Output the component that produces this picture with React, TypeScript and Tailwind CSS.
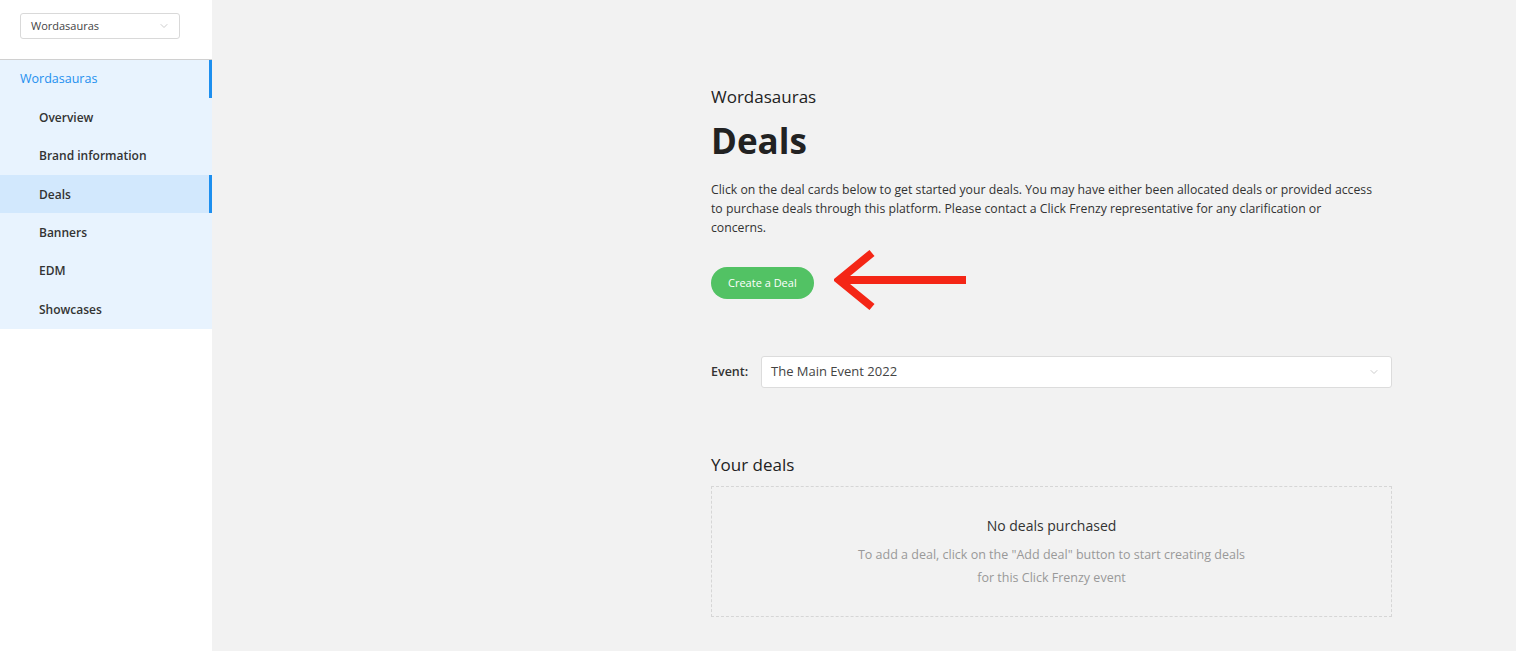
import React from 'react';
import { ChevronDown } from 'lucide-react';

const navItems = ['Overview', 'Brand information', 'Deals', 'Banners', 'EDM', 'Showcases'];

function Sidebar() {
  return (
    <aside className="w-[212px] shrink-0 bg-white min-h-[651px]">
      <div className="h-[59px] px-5 pt-[13px]">
        <div className="flex h-[26px] w-[160px] items-center justify-between rounded-[3px] border border-[#d9d9d9] pl-[10px] pr-[9px] text-[11px] text-[#444]">
          <span>Wordasauras</span>
          <ChevronDown className="h-3 w-3 text-[#bbb]" strokeWidth={1.5} />
        </div>
      </div>
      <nav className="border-t border-[#d0d0d0] bg-[#e8f3fe]">
        <div className="flex h-[38px] items-center border-r-[3px] border-[#1d8fef] pl-5 text-[12.5px] text-[#1d8fef]">
          Wordasauras
        </div>
        {navItems.map((item) => {
          const active = item === 'Deals';
          return (
            <div
              key={item}
              className={
                active
                  ? 'flex h-[38px] items-center border-r-[3px] border-[#1d8fef] bg-[#d2e8fd] pl-[39px] pt-[1px] text-[12px] font-semibold text-[#333]'
                  : 'flex h-[38.5px] items-center pl-[39px] pt-[1px] text-[12px] font-semibold text-[#333]'
              }
            >
              {item}
            </div>
          );
        })}
      </nav>
    </aside>
  );
}

function Arrow() {
  return (
    <svg width="134" height="64" viewBox="0 0 134 64" className="ml-[20px] -mt-[4px]">
      <g stroke="#f42616" strokeWidth="8" fill="none">
        <line x1="4" y1="31" x2="132" y2="31" />
        <polyline points="38,4 5,31 38,58" strokeLinejoin="miter" />
      </g>
    </svg>
  );
}

export default function App() {
  return (
    <div className="flex min-h-[651px] bg-[#f2f2f2] font-['Open_Sans',sans-serif] text-[#333]">
      <Sidebar />
      <main className="flex-1 pl-[499px] pt-[86px]">
        <div className="w-[681px]">
          <div className="text-[17px] leading-[22px] text-[#222]">Wordasauras</div>
          <h1 className="mt-[11px] text-[35px] font-bold leading-[44px] text-[#222]">Deals</h1>
          <p className="mt-[17px] whitespace-nowrap text-[12.25px] leading-[19px] text-[#333]">
            Click on the deal cards below to get started your deals. You may have either been allocated deals or provided access
            <br />
            to purchase deals through this platform. Please contact a Click Frenzy representative for any clarification or
            <br />
            concerns.
          </p>
          <div className="mt-[16px] flex items-center">
            <button className="h-[32px] rounded-full bg-[#52c264] px-[17px] text-[11px] text-white">
              Create a Deal
            </button>
            <Arrow />
          </div>

          <div className="mt-[43px] flex items-center">
            <span className="w-[50px] text-[12.5px] font-semibold text-[#333]">Event:</span>
            <div className="flex h-[32px] flex-1 items-center justify-between rounded-[3px] border border-[#dcdcdc] bg-white pl-[9px] pr-[11px] text-[13px] text-[#444]">
              <span>The Main Event 2022</span>
              <ChevronDown className="h-3 w-3 text-[#bbb]" strokeWidth={1.5} />
            </div>
          </div>

          <h2 className="mt-[66px] text-[17px] leading-[22px] text-[#222]">Your deals</h2>
          <div className="mt-[10px] flex h-[131px] flex-col items-center justify-center border border-dashed border-[#d6d6d6] text-center">
            <div className="text-[14px] text-[#333]">No deals purchased</div>
            <div className="mt-[7px] text-[12.5px] leading-[23px] text-[#999]">
              To add a deal, click on the "Add deal" button to start creating deals
              <br />
              for this Click Frenzy event
            </div>
          </div>
        </div>
      </main>
    </div>
  );
}
